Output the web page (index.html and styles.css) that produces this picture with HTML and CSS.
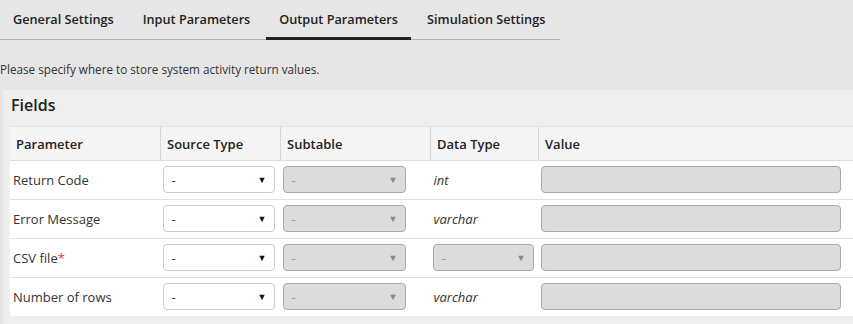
FILE: index.html
```html
<!DOCTYPE html>
<html lang="en">
<head>
  <meta charset="UTF-8">
  <title>Output Parameters</title>
  <link rel="stylesheet" href="styles.css">
</head>
<body>
  <!-- Tabs -->
  <div class="tabs">
    <div class="tab">General Settings</div>
    <div class="tab">Input Parameters</div>
    <div class="tab active">Output Parameters</div>
    <div class="tab">Simulation Settings</div>
  </div>

  <p class="intro">Please specify where to store system activity return values.</p>

  <!-- Fields panel -->
  <div class="panel">
    <h2>Fields</h2>
    <table class="fields">
      <thead>
        <tr>
          <th class="col-param">Parameter</th>
          <th class="col-source">Source Type</th>
          <th class="col-sub">Subtable</th>
          <th class="col-type">Data Type</th>
          <th>Value</th>
        </tr>
      </thead>
      <tbody>
        <tr>
          <td>Return Code</td>
          <td><div class="select source"><span>-</span><span class="arrow">&#9660;</span></div></td>
          <td><div class="select sub disabled"><span>-</span><span class="arrow">&#9660;</span></div></td>
          <td class="type">int</td>
          <td><div class="value"></div></td>
        </tr>
        <tr>
          <td>Error Message</td>
          <td><div class="select source"><span>-</span><span class="arrow">&#9660;</span></div></td>
          <td><div class="select sub disabled"><span>-</span><span class="arrow">&#9660;</span></div></td>
          <td class="type">varchar</td>
          <td><div class="value"></div></td>
        </tr>
        <tr>
          <td>CSV file<span class="req">*</span></td>
          <td><div class="select source"><span>-</span><span class="arrow">&#9660;</span></div></td>
          <td><div class="select sub disabled"><span>-</span><span class="arrow">&#9660;</span></div></td>
          <td><div class="select dtype disabled"><span>-</span><span class="arrow">&#9660;</span></div></td>
          <td><div class="value"></div></td>
        </tr>
        <tr>
          <td>Number of rows</td>
          <td><div class="select source"><span>-</span><span class="arrow">&#9660;</span></div></td>
          <td><div class="select sub disabled"><span>-</span><span class="arrow">&#9660;</span></div></td>
          <td class="type">varchar</td>
          <td><div class="value"></div></td>
        </tr>
      </tbody>
    </table>
  </div>
</body>
</html>
```

FILE: styles.css
```css
/* General Styling */
body {
  margin: 0;
  font-family: "Open Sans", Arial, sans-serif;
  font-size: 13px;
  color: #333;
  background-color: #e6e6e6;
  overflow: hidden;
}

/* Tabs */
.tabs {
  display: flex;
  width: 560px;
  height: 39px;
  border-bottom: 1px solid #b4b4b4;
}

.tab {
  padding: 11px 13px 0;
  margin-right: 3px;
  line-height: 16px;
  font-size: 12.7px;
  font-weight: 600;
  color: #222;
  white-space: nowrap;
  border-bottom: 3px solid transparent;
  height: 26px;
}

.tab.active {
  border-bottom-color: #222;
}

.intro {
  margin: 21px 0 0;
  line-height: 16px;
  font-size: 11.7px;
}

/* Fields panel */
.panel {
  margin: 13px 0 0 3px;
  padding: 0 0 8px 7px;
  background-color: #efefef;
}

.panel h2 {
  margin: 0;
  padding: 3px 0 0 1px;
  height: 33px;
  line-height: 24px;
  font-size: 16px;
  font-weight: 600;
  color: #222;
}

.fields {
  width: 100%;
  border-collapse: collapse;
  background-color: #fff;
}

.fields th {
  height: 33px;
  padding: 0 6px;
  text-align: left;
  font-weight: 600;
  color: #222;
  background-color: #f5f5f5;
  border-left: 1px solid #d6d6d6;
  border-top: 1px solid #e2e2e2;
  border-bottom: 1px solid #dcdcdc;
}

.fields th:first-child {
  border-left: none;
}

.col-param { width: 138px; }
.col-source { width: 107px; }
.col-sub { width: 137px; }
.col-type { width: 95px; }

.fields td {
  height: 37px;
  padding: 0 3px 1px;
  border-bottom: 1px solid #e0e0e0;
  white-space: nowrap;
}

.fields tr:last-child td {
  border-bottom: none;
}

.fields td.type {
  font-style: italic;
}

.req {
  color: #e8373d;
}

/* Select boxes */
.select {
  display: flex;
  align-items: center;
  justify-content: space-between;
  box-sizing: border-box;
  height: 27px;
  margin-left: -1px;
  padding: 0 7px 0 8px;
  border: 1px solid #ccc;
  border-radius: 4px;
  background-color: #fff;
  color: #333;
}

.select .arrow {
  font-size: 9px;
  color: #111;
}

.select.source { width: 112px; }
.select.sub { width: 123px; }
.select.dtype { width: 101px; }

.select.disabled {
  background-color: #dcdcdc;
  border-color: #aaa;
  color: #999;
}

.select.disabled .arrow {
  color: #888;
}

/* Value input */
.value {
  box-sizing: border-box;
  width: 300px;
  height: 27px;
  margin-left: -1px;
  border: 1px solid #aaa;
  border-radius: 4px;
  background-color: #dcdcdc;
}
```
